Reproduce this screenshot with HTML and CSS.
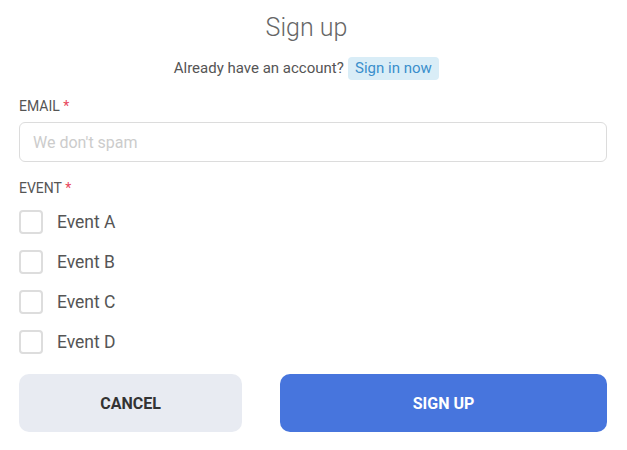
FILE: index.html
```html
<!DOCTYPE html>
<html>
<head>
<meta charset="utf-8">
<link rel="stylesheet" href="styles.css">
</head>
<body>
<form class="form">
  <h1 class="title">Sign up</h1>
  <p class="sub">Already have an account? <a class="badge" href="#">Sign in now</a></p>
  <label class="label">EMAIL <span class="req">*</span></label>
  <input class="input" type="text" placeholder="We don't spam">
  <div class="label label-event">EVENT <span class="req">*</span></div>
  <div class="checks">
    <label class="check"><span class="box"></span>Event A</label>
    <label class="check"><span class="box"></span>Event B</label>
    <label class="check"><span class="box"></span>Event C</label>
    <label class="check"><span class="box"></span>Event D</label>
  </div>
  <div class="actions">
    <button type="button" class="btn btn-cancel">CANCEL</button>
    <button type="button" class="btn btn-primary">SIGN UP</button>
  </div>
</form>
</body>
</html>
```

FILE: styles.css
```css
html, body {
  margin: 0;
  padding: 0;
  background: #fff;
}
body {
  font-family: Roboto, "Liberation Sans", sans-serif;
  color: #555;
}
.form {
  display: flex;
  flex-direction: column;
  padding: 0 20px 0 19px;
}
.title {
  margin: 13px 0 0;
  padding-right: 13px;
  text-align: center;
  font-weight: 300;
  font-size: 25px;
  line-height: 30px;
  color: #666;
}
.sub {
  margin: 14px 0 0;
  padding-right: 13px;
  text-align: center;
  font-size: 15px;
  line-height: 22px;
  color: #555;
}
.badge {
  display: inline-block;
  background: #d9edf7;
  color: #3a8fcc;
  text-decoration: none;
  padding: 0 7.5px;
  border-radius: 4px;
  line-height: 23px;
  font-size: 15px;
}
.label {
  display: block;
  margin-top: 17px;
  font-size: 14px;
  line-height: 18px;
  color: #555;
}
.req {
  color: #e8475c;
}
.input {
  margin-top: 7px;
  box-sizing: border-box;
  height: 40px;
  width: 100%;
  border: 1px solid #dcdcdc;
  border-radius: 6px;
  padding: 0 13px;
  font-family: Roboto, "Liberation Sans", sans-serif;
  font-size: 16px;
  color: #555;
  outline: none;
}
.input::placeholder {
  color: #ccc;
}
.label-event {
  margin-top: 17px;
}
.checks {
  display: flex;
  flex-direction: column;
  gap: 16px;
  margin-top: 13px;
}
.check {
  display: flex;
  align-items: center;
  gap: 14px;
  height: 24px;
  font-size: 17.5px;
  color: #555;
}
.box {
  box-sizing: border-box;
  width: 24px;
  height: 24px;
  border: 2px solid #ddd;
  border-radius: 4px;
  flex: none;
}
.actions {
  display: grid;
  grid-template-columns: 223px 1fr;
  gap: 38px;
  margin-top: 20px;
}
.btn {
  height: 58px;
  border: none;
  border-radius: 10px;
  font-family: Roboto, "Liberation Sans", sans-serif;
  font-weight: 700;
  font-size: 16px;
  cursor: pointer;
}
.btn-cancel {
  background: #e8ebf2;
  color: #333;
}
.btn-primary {
  background: #4775dd;
  color: #fff;
}
```
